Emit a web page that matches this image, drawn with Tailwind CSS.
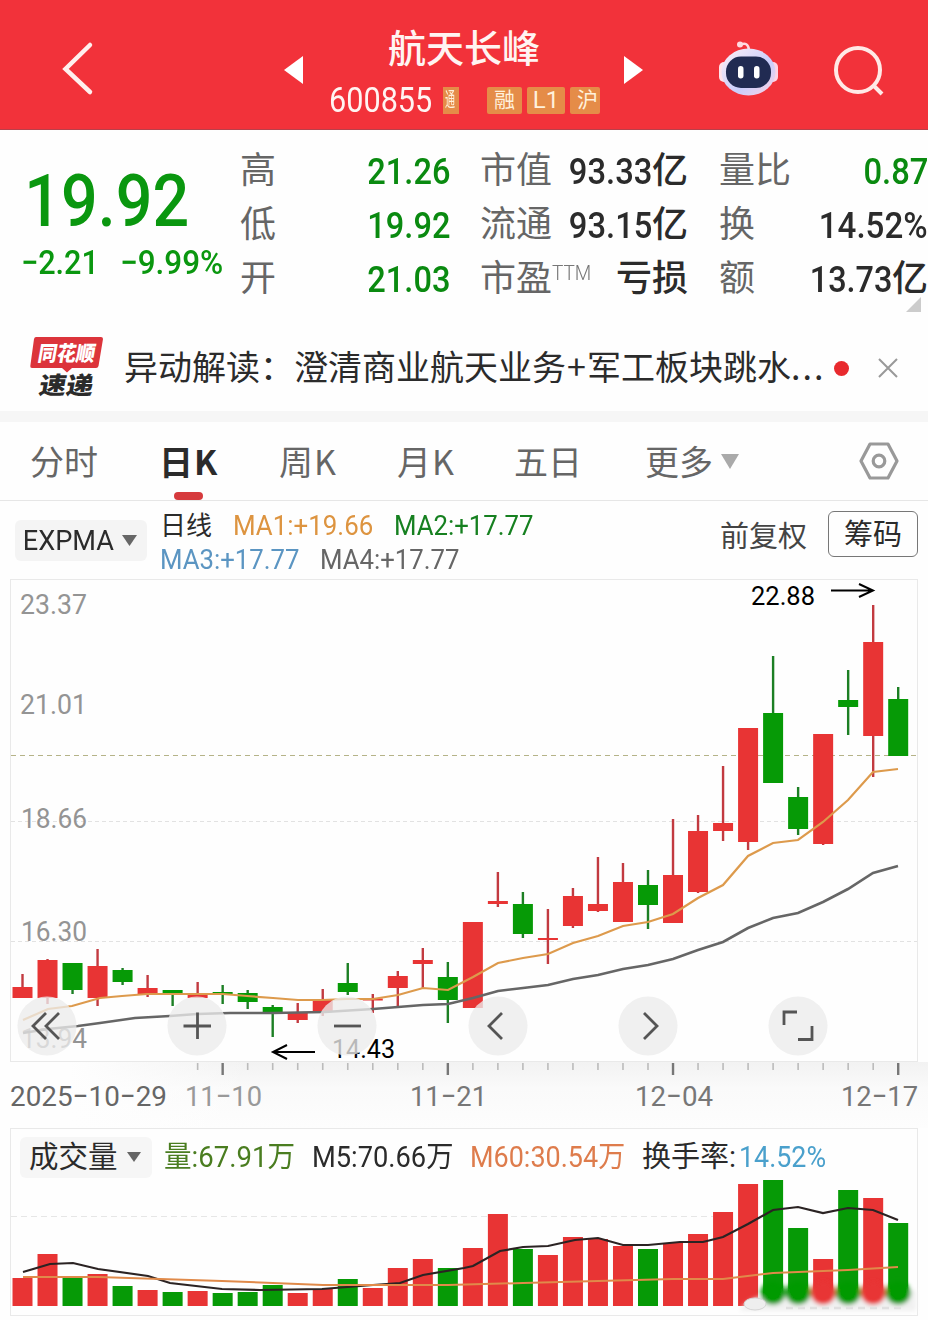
<!DOCTYPE html>
<html lang="zh-CN">
<head>
    <meta charset="UTF-8">
    <meta name="viewport" content="width=device-width, initial-scale=1.0">
    <title>航天长峰 600855</title>
    <script src="https://cdn.jsdelivr.net/npm/@tailwindcss/browser@4"></script>
</head>
<body class="bg-white">
<div class="w-[928px] h-[1320px] overflow-hidden flex flex-col bg-[#fefefe] text-[#2b2b2b] whitespace-nowrap font-['Roboto','Noto_Sans_CJK_SC',sans-serif]">

    <!-- Header -->
    <header class="h-[130px] shrink-0 flex items-center bg-[#f2323a] border-b border-[#b8404a] text-white">
        <svg class="w-[284px] h-[130px] shrink-0" viewBox="0 0 284 130" fill="none" stroke="#fff0ee" stroke-width="4.5">
            <path d="M90 45 L65.500 69 L90 92" stroke-linecap="round"/>
        </svg>
        <svg class="w-[20px] h-[130px] shrink-0" viewBox="0 0 20 130"><path d="M0 70 L19 56 V84 Z" fill="#fff"/></svg>
        <div class="w-[320px] h-full pt-[23px] pl-[26px]">
            <h1 class="w-[268px] h-[51px] text-center text-[38px] leading-[52px] font-medium text-[#fff4f2]">航天长峰</h1>
            <div class="flex items-center h-[52px] text-[24px] leading-[27px] text-[#fff1dc]">
                <span class="w-[113px] shrink-0 -ml-px text-[35px] text-[#fff4f2] origin-left scale-x-[.875]">600855</span>
                <span class="w-[16px] h-[27px] ml-px mr-[28px] bg-[#e58c48] text-[20px]"><span class="block w-[20px] ml-[2px] origin-left scale-x-50">通</span></span>
                <span class="w-[35px] h-[27px] mr-[5px] rounded-xs bg-[#e58c48] text-center text-[21px]">融</span>
                <span class="w-[38px] h-[27px] mr-[5px] rounded-xs bg-[#e58c48] text-center">L1</span>
                <span class="w-[30px] h-[27px] rounded-xs bg-[#e58c48] text-right pr-[2px] text-[21px]">沪</span>
            </div>
        </div>
        <svg class="w-[20px] h-[130px] shrink-0" viewBox="0 0 20 130"><path d="M19 70 L0 56 V84 Z" fill="#fff"/></svg>
        <svg class="w-[284px] h-[130px] shrink-0" viewBox="644 0 284 130" fill="none">
            <defs>
                <linearGradient id="bot" x1="0" y1="0" x2="1" y2="1">
                    <stop offset="0" stop-color="#fff0f6"/>
                    <stop offset=".6" stop-color="#c9cdfb"/>
                    <stop offset="1" stop-color="#ffd3e4"/>
                </linearGradient>
            </defs>
            <path d="M740 45 Q748 41 749 50" stroke="#ffd9e0" stroke-width="2.5"/>
            <circle cx="740" cy="44.500" r="3" fill="#ffd9e0"/>
            <rect x="719" y="62" width="10" height="20" rx="5" fill="#ffe3ea"/>
            <rect x="768" y="62" width="10" height="20" rx="5" fill="#ffd3e4"/>
            <ellipse cx="748.500" cy="72" rx="27" ry="23.500" fill="url(#bot)"/>
            <rect x="726" y="56.500" width="45" height="31.500" rx="15" fill="#212b52"/>
            <rect x="738" y="66" width="5.500" height="12.500" rx="2.700" fill="#fff"/>
            <rect x="754" y="66" width="5.500" height="12.500" rx="2.700" fill="#fff"/>
            <circle cx="858" cy="70" r="22" stroke="#ffe9e6" stroke-width="4"/>
            <path d="M873 85 L882 94" stroke="#ffe9e6" stroke-width="4"/>
        </svg>
    </header>

    <!-- Quote -->
    <section class="h-[195px] shrink-0 flex text-[36px] leading-[54px] relative">
        <div class="w-[240px] text-[#0a970f]">
            <div class="h-[70px] mt-[34px] ml-[27px] text-[73px] leading-[74px] font-medium origin-left scale-x-[.885]"><span class="-ml-[3px]">19.92</span></div>
            <div class="flex h-[54px] pl-[21px] text-[34px] leading-[56px]">
                <span class="w-[99px] font-medium origin-left scale-x-[.9]">−2.21</span>
                <span class="font-medium origin-left scale-x-[.925]">−9.99%</span>
            </div>
        </div>
        <div class="w-[210px] pt-[14px]">
            <div class="flex justify-between text-[#666]">高<span class="text-[#0a8a10] text-[37px] leading-[56px] h-[54px] font-medium origin-right scale-x-[.88]">21.26</span></div>
            <div class="flex justify-between text-[#666]">低<span class="text-[#0a8a10] text-[37px] leading-[56px] h-[54px] font-medium origin-right scale-x-[.88]">19.92</span></div>
            <div class="flex justify-between text-[#666]">开<span class="text-[#0a8a10] text-[37px] leading-[56px] h-[54px] font-medium origin-right scale-x-[.88]">21.03</span></div>
        </div>
        <div class="w-[208px] ml-[30px] pt-[14px]">
            <div class="flex"><span class="text-[#666]">市值</span><span class="ml-auto text-[37px] leading-[56px] h-[54px] font-medium origin-right scale-x-[.885]">93.33</span><span class="font-medium">亿</span></div>
            <div class="flex"><span class="text-[#666]">流通</span><span class="ml-auto text-[37px] leading-[56px] h-[54px] font-medium origin-right scale-x-[.885]">93.15</span><span class="font-medium">亿</span></div>
            <div class="flex"><span class="text-[#666]">市盈</span><span class="w-[40px] text-[#777] text-[20px] leading-[42px] font-light origin-left scale-x-95">TTM</span><span class="ml-auto font-medium">亏损</span></div>
        </div>
        <div class="w-[209px] ml-[31px] pt-[14px]">
            <div class="flex justify-between text-[#666]">量比<span class="text-[#0a8a10] text-[37px] leading-[56px] h-[54px] font-medium origin-right scale-x-[.885]">0.87</span></div>
            <div class="flex justify-between text-[#666]">换<span class="text-[#2b2b2b] text-[37px] leading-[56px] h-[54px] font-medium origin-right scale-x-[.895]">14.52%</span></div>
            <div class="flex"><span class="text-[#666]">额</span><span class="ml-auto text-[37px] leading-[56px] h-[54px] font-medium origin-right scale-x-[.875]">13.73</span><span class="font-medium">亿</span></div>
        </div>
        <svg class="absolute left-[906px] top-[167px] w-[15px] h-[15px]" viewBox="0 0 15 15"><path d="M15 0 V15 H0 Z" fill="#ccc"/></svg>
    </section>

    <!-- News strip -->
    <section class="h-[86px] shrink-0 flex items-center font-['Noto_Sans_CJK_SC',sans-serif]">
        <svg class="w-[124px] h-[86px] shrink-0" viewBox="0 325 124 86">
            <path d="M36 337 H101 Q103 337 103 339 L98.500 366 Q98 368 96 368 H72 L67 372.500 L62 368 H32 Q30 368 30.300 366 L34 339 Q34.500 337 36 337 Z" fill="#dc343b"/>
            <text x="0" y="0" transform="translate(37 360.500) skewX(-10)" font-size="21" font-weight="900" fill="#fff" textLength="57" lengthAdjust="spacingAndGlyphs">同花顺</text>
            <text x="0" y="0" transform="translate(38 393.500) skewX(-10)" font-size="24" font-weight="900" fill="#2b2b2b" textLength="54" lengthAdjust="spacingAndGlyphs">速递</text>
        </svg>
        <span class="w-[701px] text-[34px] leading-[46px] h-[50px]">异动解读：澄清商业航天业务<span class="inline-block w-[21px] text-center">+</span>军工板块跳水<span class="tracking-[2px]">...</span></span>
        <span class="size-[15px] ml-[9px] rounded-full bg-[#e82a2e]"></span>
        <svg class="w-[20px] h-[20px] ml-[29px]" viewBox="0 0 20 20" stroke="#999" stroke-width="2"><path d="M1 1 L19 19 M19 1 L1 19"/></svg>
    </section>

    <div class="h-[11px] shrink-0 bg-[#f6f6f6]"></div>

    <!-- Period tabs -->
    <nav class="h-[79px] shrink-0 flex items-center border-b border-[#e6e6e6] text-[34px] leading-[78px] text-[#666] font-['Noto_Sans_CJK_SC',sans-serif] relative">
        <span class="w-[129px] ml-[30px]">分时</span>
        <span class="w-[120px] font-bold text-[#2b2b2b]">日<span class="ml-px">K</span></span>
        <span class="w-[118px]">周<span class="ml-px">K</span></span>
        <span class="w-[117px]">月<span class="ml-px">K</span></span>
        <span class="w-[131px]">五日</span>
        <span class="w-[76px]">更多</span>
        <svg class="w-[18px] h-[15px]" viewBox="0 0 18 15"><path d="M0 0 H18 L9 15 Z" fill="#aaa"/></svg>
        <svg class="w-[40px] h-[38px] ml-[120px]" viewBox="0 0 40 38" fill="none" stroke="#999" stroke-width="3.200" stroke-linejoin="round">
            <path d="M11 2 H29 L38 19 L29 36 H11 L2 19 Z"/>
            <circle cx="20" cy="19" r="5.800"/>
        </svg>
        <span class="absolute left-[174px] top-[70px] w-[29px] h-[8px] rounded-full bg-[#d63a3d]"></span>
    </nav>

    <!-- Indicator row -->
    <section class="h-[78px] shrink-0 flex items-start">
        <div class="w-[132px] h-[41px] ml-[15px] mt-[19px] flex items-center rounded-md bg-[#f4f4f4]">
            <span class="w-[98px] pl-[8px] pt-px text-[28px] origin-left scale-x-[.97]">EXPMA</span>
            <svg class="w-[15px] h-[11px] ml-[9px]" viewBox="0 0 15 11"><path d="M0 0 H15 L7.500 11 Z" fill="#666"/></svg>
        </div>
        <div class="w-[400px] ml-[13px] pt-[8px] text-[28px] leading-[34px]">
            <div class="flex">
                <span class="w-[73px] text-[26px]">日线</span>
                <span class="w-[161px] text-[#dd9440] origin-left scale-x-[.925]">MA1:+19.66</span>
                <span class="text-[#168020] origin-left scale-x-[.92]">MA2:+17.77</span>
            </div>
            <div class="flex">
                <span class="w-[160px] text-[#5b95c2] origin-left scale-x-[.92]">MA3:+17.77</span>
                <span class="text-[#666] origin-left scale-x-[.92]">MA4:+17.77</span>
            </div>
        </div>
        <span class="ml-auto mt-[13px] text-[29px] leading-[46px] text-[#444]">前复权</span>
        <span class="w-[90px] h-[46px] ml-[21px] mr-[10px] mt-[10px] border border-[#777] rounded-md text-center text-[29px] leading-[47px]">筹码</span>
    </section>

    <!-- Candles and date axis -->
    <svg class="w-[928px] h-[549px] shrink-0" viewBox="0 579 928 549" font-size="28.500">
        <defs>
            <linearGradient id="axis-bg" x1="0" y1="0" x2="0" y2="1">
                <stop offset="0" stop-color="#f2f2f2"/>
                <stop offset=".4" stop-color="#fafafa"/>
                <stop offset="1" stop-color="#fdfdfd"/>
            </linearGradient>
            <linearGradient id="axis-fade" x1="0" y1="0" x2="1" y2="0">
                <stop offset="0" stop-color="#fefefe"/>
                <stop offset="1" stop-color="#fefefe" stop-opacity="0"/>
            </linearGradient>
        </defs>
        <rect x="70" y="1062" width="858" height="66" fill="url(#axis-bg)"/>
        <rect x="69" y="1062" width="180" height="66" fill="url(#axis-fade)"/>
        <rect x="10.500" y="579.500" width="907" height="482" fill="none" stroke="#e9e9e9"/>
        <path d="M11 821.500 H917 M11 941.500 H917" stroke="#e2e2e2" stroke-dasharray="4 3"/>
        <path d="M11 755.500 H917" stroke="#b5b388" stroke-dasharray="5 4"/>
        <g fill="#949494">
            <text x="20" y="614" textLength="67" lengthAdjust="spacingAndGlyphs">23.37</text>
            <text x="20" y="714" textLength="67" lengthAdjust="spacingAndGlyphs">21.01</text>
            <text x="21" y="828" textLength="66" lengthAdjust="spacingAndGlyphs">18.66</text>
            <text x="21" y="941" textLength="66" lengthAdjust="spacingAndGlyphs">16.30</text>
            <text x="21" y="1048" textLength="66" lengthAdjust="spacingAndGlyphs">13.94</text>
        </g>
        <g id="candles"></g>
        <polyline fill="none" stroke="#dd9a4c" stroke-width="2.200" points="23,1020 48,1009 72,1006 100,998 122,996 147,994 197,994 223,994 247,996 273,998 298,1000 322,1000 347,999 373,999 398,995 423,988 448,990 473,977 498,963 523,958 548,954 573,943 598,936 623,926 648,922 673,914 698,898 723,885 748,856 773,843 798,840 823,822 848,800 873,772 898,769"/>
        <polyline fill="none" stroke="#666" stroke-width="2.600" points="23,1033 48,1029 78,1026 100,1023 135,1018 170,1016 197,1014 230,1013 273,1013 325,1012 373,1009 398,1007 423,1005 448,1004 473,998 498,991 523,988 548,985 573,979 598,975 623,969 648,965 673,959 698,950 723,942 748,928 773,918 798,913 823,902 848,889 873,873 898,866"/>
        <g fill="#000" font-size="26">
            <text x="751" y="605" textLength="64" lengthAdjust="spacingAndGlyphs">22.88</text>
            <text x="332" y="1058" textLength="63" lengthAdjust="spacingAndGlyphs">14.43</text>
        </g>
        <g fill="none" stroke="#000" stroke-width="2">
            <path d="M831 590.500 H873 M859 584 L873 590.500 L859 597"/>
            <path d="M315 1052 H273 M287 1045 L273 1052 L287 1059"/>
        </g>
        <g fill="#ececec" fill-opacity=".78">
            <circle cx="47" cy="1026" r="29.500"/>
            <circle cx="197" cy="1026" r="29.500"/>
            <circle cx="347" cy="1026" r="29.500"/>
            <circle cx="498" cy="1026" r="29.500"/>
            <circle cx="648" cy="1026" r="29.500"/>
            <circle cx="798" cy="1026" r="29.500"/>
        </g>
        <g fill="none" stroke="#555" stroke-width="2.800">
            <path d="M46 1013 L33 1026 L46 1039 M59 1013 L46 1026 L59 1039"/>
            <path d="M183.500 1026 H211 M197.500 1012.500 V1039"/>
            <path d="M334 1026 H361"/>
            <path d="M502 1013 L489 1026 L502 1039"/>
            <path d="M644 1013 L657 1026 L644 1039"/>
            <path d="M784 1025 V1012 H797 M812 1026 V1039.500 H798"/>
        </g>
        <g id="ticks"></g>
        <g fill="#666" font-size="28.500">
            <text x="10" y="1106" textLength="157" lengthAdjust="spacingAndGlyphs">2025−10−29</text>
            <text x="185" y="1106" fill="#999" textLength="77" lengthAdjust="spacingAndGlyphs">11−10</text>
            <text x="410" y="1106" fill="#777" textLength="77" lengthAdjust="spacingAndGlyphs">11−21</text>
            <text x="635" y="1106" fill="#777" textLength="78" lengthAdjust="spacingAndGlyphs">12−04</text>
            <text x="841" y="1106" fill="#777" textLength="77" lengthAdjust="spacingAndGlyphs">12−17</text>
        </g>
    </svg>

    <!-- Volume -->
    <section class="h-[188px] w-[908px] ml-[10px] shrink-0 border border-[#e9e9e9] flex flex-col">
        <div class="h-[56px] flex items-center text-[29px] leading-[41px]">
            <div class="w-[132px] h-[41px] ml-[9px] flex items-center rounded-md bg-[#f6f6f6]">
                <span class="pl-[9px] pt-px text-[29.500px]">成交量</span>
                <svg class="w-[14px] h-[10px] ml-[9px]" viewBox="0 0 14 10"><path d="M0 0 H14 L7 10 Z" fill="#666"/></svg>
            </div>
            <span class="w-[148px] ml-[12px] text-[#4a7d20] origin-left scale-x-[.95]">量:67.91万</span>
            <span class="w-[158px] origin-left scale-x-[.94]">M5:70.66万</span>
            <span class="w-[172px] text-[#de7c4c] origin-left scale-x-[.93]">M60:30.54万</span>
            <span class="w-[97px] pt-px">换手率:</span>
            <span class="text-[#4aa0cc] origin-left scale-x-[.925]">14.52%</span>
        </div>
        <svg class="w-[906px] h-[130px]" viewBox="11 1185 906 130" overflow="visible">
            <defs>
                <filter id="soft" x="-20%" y="-50%" width="140%" height="200%"><feGaussianBlur stdDeviation="2"/></filter>
            </defs>
            <path d="M11 1216.500 H730" stroke="#e6e6e6" stroke-dasharray="6 4"/>
            <g id="volumes"></g>
            <polyline fill="none" stroke="#2b2323" stroke-width="2.200" points="23,1272 50,1264 73,1263 98,1269 148,1276 170,1283 222,1289 260,1290 322,1289 373,1285 400,1283 423,1275 464,1268 473,1266 500,1251 523,1247 548,1246 575,1240 598,1238 623,1245 648,1245 680,1242 703,1242 723,1237 748,1224 773,1210 798,1207 823,1213 848,1208 873,1210 898,1220"/>
            <polyline fill="none" stroke="#e08a4a" stroke-width="2" points="23,1277 98,1277 222,1281 323,1285 373,1285 448,1285 523,1283 673,1279 723,1279 773,1273 848,1270 898,1267"/>
            <!-- smeared footer over the last bars -->
            <g filter="url(#soft)">
                <path d="M740 1310 Q750 1297 762 1297 L766 1290 H916 V1311 H740 Z" fill="#f1f1f1"/>
                <g id="drops"></g>
            </g>
            <ellipse cx="755" cy="1304" rx="11" ry="6" fill="#eee" stroke="#d4d4d4"/>
            <path d="M786 1308 H905" stroke="#e0e0e0" stroke-width="2.500" stroke-dasharray="7 5"/>
        </svg>
    </section>
</div>

<script>
    const RED = '#e83434', GREEN = '#069a06';
    // [up, high, open/close top, open/close bottom, low, volume top]
    const days = [
        [1, 974, 987, 998, 998, 1278], [1, 959, 960, 998, 1004, 1254], [0, 963, 963, 990, 994, 1277],
        [1, 949, 966, 998, 1006, 1274], [0, 968, 970, 982, 985, 1286], [1, 975, 988, 995, 997, 1290],
        [0, 990, 990, 995, 1006, 1292], [1, 982, 994, 998, 998, 1291], [0, 985, 992, 995, 1004, 1293],
        [0, 990, 993, 1002, 1009, 1292], [0, 1005, 1007, 1013, 1037, 1285], [1, 1003, 1013, 1020, 1023, 1293],
        [1, 989, 1000, 1012, 1016, 1289], [0, 963, 983, 992, 995, 1279], [1, 994, 998.5, 1000.5, 1013, 1288],
        [1, 971, 976, 988, 1007, 1268], [1, 948, 960, 964, 988, 1259], [0, 962, 977, 1000, 1023, 1268],
        [1, 922, 922, 1008, 1008, 1248], [1, 872, 901, 904, 907, 1214], [0, 892, 904, 934, 938, 1249],
        [1, 909, 938, 940, 964, 1255], [1, 888, 896, 926, 928, 1237], [1, 857, 904, 911, 912, 1239],
        [1, 863, 882, 922, 922, 1246], [0, 870, 885, 905, 929, 1249], [1, 819, 875, 923, 923, 1243],
        [1, 815, 831, 892, 893, 1234], [1, 766, 823, 831, 841, 1212], [1, 728, 728, 842, 850, 1184],
        [0, 656, 713, 783, 783, 1180], [0, 787, 797, 829, 835, 1228], [1, 734, 734, 844, 845, 1259],
        [0, 670, 700, 707, 735, 1190], [1, 605, 642, 736, 777, 1198], [0, 687, 699, 756, 756, 1223]
    ];
    let candles = '', volumes = '', ticks = '', drops = '';
    days.forEach(([up, high, top, bottom, low, vol], i) => {
        const x = 22.5 + i * 25.02;
        const color = up ? RED : GREEN;
        const wick = up ? '#c23a40' : '#1c7f24';
        candles += `<path d="M${x} ${high} V${low}" stroke="${wick}" stroke-width="2.4"/>`;
        candles += `<rect x="${x - 10}" y="${top}" width="20" height="${bottom - top}" fill="${color}"/>`;
        volumes += `<rect x="${x - 10}" y="${vol}" width="20" height="${1306 - vol}" fill="${color}"/>`;
        if (i > 6) {
            const major = i % 9 === 8;
            ticks += `<path d="M${x} 1063 V${major ? 1075 : 1070}" stroke="${major ? '#777' : '#bbb'}" stroke-width="${major ? 2.4 : 1.6}"/>`;
        }
        if (i > 29) {
            drops += `<ellipse cx="${x}" cy="1293" rx="12.5" ry="11.5" fill="${color}"/>`;
        }
    });
    document.getElementById('candles').innerHTML = candles;
    document.getElementById('volumes').innerHTML = volumes;
    document.getElementById('ticks').innerHTML = ticks;
    document.getElementById('drops').innerHTML = drops;
</script>
</body>
</html>
